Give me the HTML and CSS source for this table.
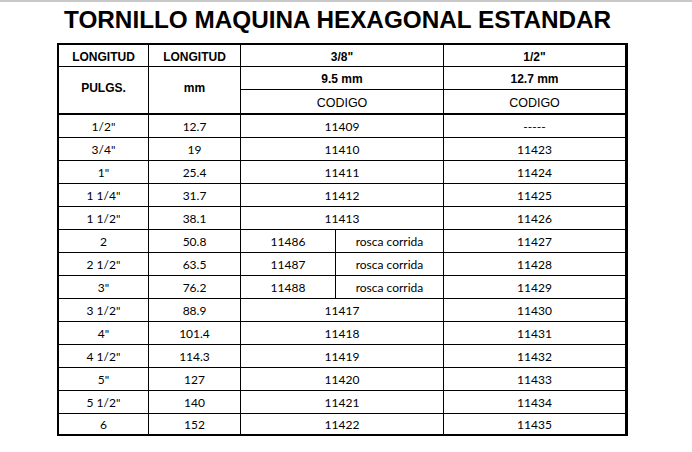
FILE: index.html
```html
<!DOCTYPE html>
<html lang="es">
<head>
<meta charset="utf-8">
<title>Tornillo maquina hexagonal estandar</title>
<link rel="stylesheet" href="styles.css">
</head>
<body>
<div class="topband"></div>
<h1 class="title">TORNILLO MAQUINA HEXAGONAL ESTANDAR</h1>
<div class="sheet">
  <div class="grid">
    <div class="h">LONGITUD</div>
    <div class="h">LONGITUD</div>
    <div class="h span2">3/8"</div>
    <div class="h">1/2"</div>

    <div class="h rows2 hb mid">PULGS.</div>
    <div class="h rows2 hb mid">mm</div>
    <div class="h span2">9.5 mm</div>
    <div class="h">12.7 mm</div>

    <div class="h span2 hb light">CODIGO</div>
    <div class="h hb light">CODIGO</div>

    <div class="d">1/2"</div><div class="d">12.7</div><div class="d span2">11409</div><div class="d">-----</div>
    <div class="d">3/4"</div><div class="d">19</div><div class="d span2">11410</div><div class="d">11423</div>
    <div class="d">1"</div><div class="d">25.4</div><div class="d span2">11411</div><div class="d">11424</div>
    <div class="d">1 1/4"</div><div class="d">31.7</div><div class="d span2">11412</div><div class="d">11425</div>
    <div class="d">1 1/2"</div><div class="d">38.1</div><div class="d span2">11413</div><div class="d">11426</div>
    <div class="d">2</div><div class="d">50.8</div><div class="d">11486</div><div class="d">rosca corrida</div><div class="d">11427</div>
    <div class="d">2 1/2"</div><div class="d">63.5</div><div class="d">11487</div><div class="d">rosca corrida</div><div class="d">11428</div>
    <div class="d">3"</div><div class="d">76.2</div><div class="d">11488</div><div class="d">rosca corrida</div><div class="d">11429</div>
    <div class="d">3 1/2"</div><div class="d">88.9</div><div class="d span2">11417</div><div class="d">11430</div>
    <div class="d">4"</div><div class="d">101.4</div><div class="d span2">11418</div><div class="d">11431</div>
    <div class="d">4 1/2"</div><div class="d">114.3</div><div class="d span2">11419</div><div class="d">11432</div>
    <div class="d">5"</div><div class="d">127</div><div class="d span2">11420</div><div class="d">11433</div>
    <div class="d">5 1/2"</div><div class="d">140</div><div class="d span2">11421</div><div class="d">11434</div>
    <div class="d">6</div><div class="d">152</div><div class="d span2">11422</div><div class="d">11435</div>
  </div>
</div>
</body>
</html>
```

FILE: styles.css
```css
html, body {
  margin: 0;
  padding: 0;
  background: #ffffff;
}

.topband {
  height: 2px;
  background: #c8c8c8;
}

.title {
  margin: 4px 0 0 0;
  padding-left: 64px;
  height: 28px;
  font-family: "Liberation Sans", Arial, sans-serif;
  font-weight: bold;
  font-size: 24.3px;
  line-height: 28px;
  color: #000000;
  white-space: nowrap;
}

.sheet {
  margin-top: 9px;
  padding-left: 57px;
}

.grid {
  display: inline-grid;
  grid-template-columns: 89px 91px 94px 107px 181px;
  grid-template-rows: 21px 22px 24px repeat(13, 22px) 20px;
  gap: 1px;
  padding: 2px 3px 2px 2px;
  background: #000000;
}

.grid > div {
  background: #ffffff;
  display: flex;
  align-items: center;
  justify-content: center;
  box-sizing: border-box;
  white-space: nowrap;
}

.h {
  font-family: "Liberation Sans", Arial, sans-serif;
  font-weight: bold;
  font-size: 12px;
  color: #000000;
  padding-top: 2px;
}

.h.light {
  font-weight: normal;
  font-size: 12.5px;
}

.hb {
  border-bottom: 1px solid #000000;
}

.h.mid {
  padding-top: 0;
  padding-bottom: 4px;
}

.span2 {
  grid-column: span 2;
}

.rows2 {
  grid-row: span 2;
}

.d {
  font-family: Lato, "Liberation Sans", sans-serif;
  font-size: 12px;
  color: #000000;
  padding-top: 1px;
}
```
